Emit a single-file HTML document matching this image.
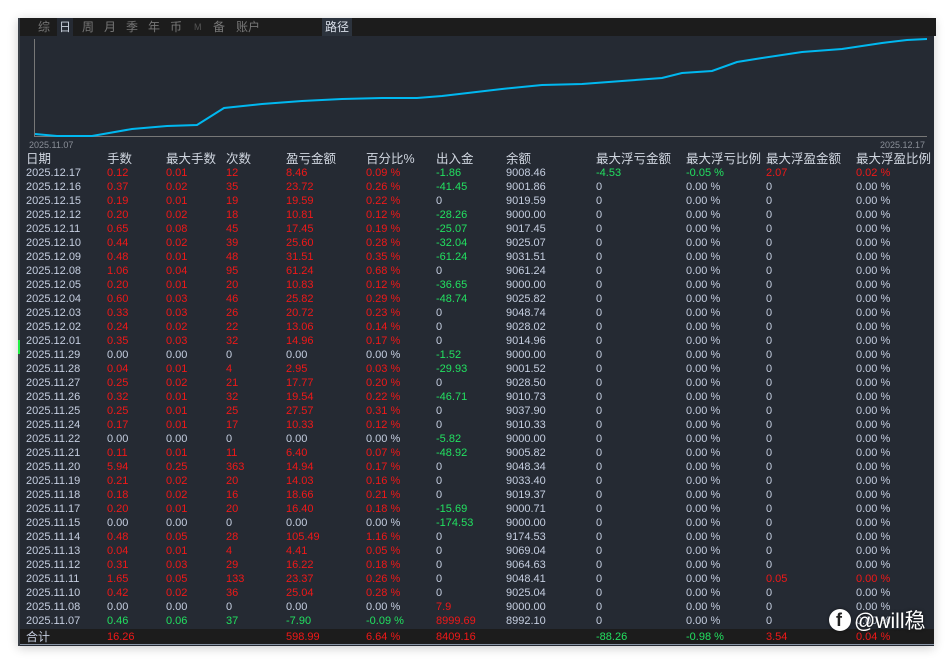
<!DOCTYPE html>
<html><head><meta charset="utf-8"><style>
*{margin:0;padding:0;box-sizing:border-box}
body{width:952px;height:663px;background:#fff;position:relative;overflow:hidden;font-family:"Liberation Sans","Noto Sans CJK SC",sans-serif}
#p{position:absolute;left:18px;top:18px;width:916px;height:628px;background:#252a33;box-shadow:0 2px 10px rgba(0,0,0,.2);border-left:2px solid #3a4048}
#tb{position:absolute;left:0;top:0;width:916px;height:18px;background:#1c1c1c;color:#777;font-size:12px;line-height:18px}
#tb span{position:absolute;top:0}
.r{position:absolute;left:0;height:14px;width:914px;font-size:11px;line-height:14px;color:#c5cee0}
.r span{position:absolute;top:0;white-space:nowrap}
.a{left:6px}.b{left:87px}.c{left:146px}.d{left:206px}.e{left:266px}.f{left:346px}.g{left:416px}.h{left:486px}.i{left:576px}.j{left:666px}.k{left:746px}.l{left:836px}
.R{color:#f01818}.G{color:#22e060}
.hd{font-size:12.5px;color:#d0d6e0;height:16px;line-height:16px}
</style></head><body>
<div id="p">
<div id="tb">
<span style="left:18px">综</span>
<span style="background:#252a33;color:#c8d0dc;padding:0 2px;left:37px">日</span>
<span style="left:62px">周</span><span style="left:84px">月</span><span style="left:106px">季</span><span style="left:128px">年</span><span style="left:150px">币</span><span style="left:174px;font-size:9px;color:#555">M</span><span style="left:193px">备</span><span style="left:216px">账户</span>
<span style="left:302px;background:#2c333d;color:#d8dee8;padding:0 3px">路径</span>
</div>
<svg style="position:absolute;left:0;top:0" width="916" height="628">
<line x1="14.5" y1="21" x2="14.5" y2="118" stroke="#777" stroke-width="1"/>
<line x1="14" y1="118.5" x2="907" y2="118.5" stroke="#777" stroke-width="1"/>
<polyline fill="none" stroke="#00b8f0" stroke-width="2" points="15,116 37,118 72,118 112,111 147,108 177,107 204,90 242,86 282,83 322,81 362,80 397,80 422,78 482,71 522,67 562,66 602,63 642,60 662,55 692,53 717,44 742,40 782,34 822,31 862,25 887,22 907,21"/>
<text x="9" y="130" font-size="9" fill="#8a8f98" font-family="Liberation Sans">2025.11.07</text>
<text x="905" y="130" font-size="9" fill="#8a8f98" font-family="Liberation Sans" text-anchor="end">2025.12.17</text>
</svg>
<div class="r hd" style="top:133px"><span class="a">日期</span><span class="b">手数</span><span class="c">最大手数</span><span class="d">次数</span><span class="e">盈亏金额</span><span class="f">百分比%</span><span class="g">出入金</span><span class="h">余额</span><span class="i">最大浮亏金额</span><span class="j">最大浮亏比例</span><span class="k">最大浮盈金额</span><span class="l">最大浮盈比例</span></div>
<div class="r" style="top:148px"><span class="a">2025.12.17</span><span class="b R">0.12</span><span class="c R">0.01</span><span class="d R">12</span><span class="e R">8.46</span><span class="f R">0.09 %</span><span class="g G">-1.86</span><span class="h">9008.46</span><span class="i G">-4.53</span><span class="j G">-0.05 %</span><span class="k R">2.07</span><span class="l R">0.02 %</span></div>
<div class="r" style="top:162px"><span class="a">2025.12.16</span><span class="b R">0.37</span><span class="c R">0.02</span><span class="d R">35</span><span class="e R">23.72</span><span class="f R">0.26 %</span><span class="g G">-41.45</span><span class="h">9001.86</span><span class="i">0</span><span class="j">0.00 %</span><span class="k">0</span><span class="l">0.00 %</span></div>
<div class="r" style="top:176px"><span class="a">2025.12.15</span><span class="b R">0.19</span><span class="c R">0.01</span><span class="d R">19</span><span class="e R">19.59</span><span class="f R">0.22 %</span><span class="g">0</span><span class="h">9019.59</span><span class="i">0</span><span class="j">0.00 %</span><span class="k">0</span><span class="l">0.00 %</span></div>
<div class="r" style="top:190px"><span class="a">2025.12.12</span><span class="b R">0.20</span><span class="c R">0.02</span><span class="d R">18</span><span class="e R">10.81</span><span class="f R">0.12 %</span><span class="g G">-28.26</span><span class="h">9000.00</span><span class="i">0</span><span class="j">0.00 %</span><span class="k">0</span><span class="l">0.00 %</span></div>
<div class="r" style="top:204px"><span class="a">2025.12.11</span><span class="b R">0.65</span><span class="c R">0.08</span><span class="d R">45</span><span class="e R">17.45</span><span class="f R">0.19 %</span><span class="g G">-25.07</span><span class="h">9017.45</span><span class="i">0</span><span class="j">0.00 %</span><span class="k">0</span><span class="l">0.00 %</span></div>
<div class="r" style="top:218px"><span class="a">2025.12.10</span><span class="b R">0.44</span><span class="c R">0.02</span><span class="d R">39</span><span class="e R">25.60</span><span class="f R">0.28 %</span><span class="g G">-32.04</span><span class="h">9025.07</span><span class="i">0</span><span class="j">0.00 %</span><span class="k">0</span><span class="l">0.00 %</span></div>
<div class="r" style="top:232px"><span class="a">2025.12.09</span><span class="b R">0.48</span><span class="c R">0.01</span><span class="d R">48</span><span class="e R">31.51</span><span class="f R">0.35 %</span><span class="g G">-61.24</span><span class="h">9031.51</span><span class="i">0</span><span class="j">0.00 %</span><span class="k">0</span><span class="l">0.00 %</span></div>
<div class="r" style="top:246px"><span class="a">2025.12.08</span><span class="b R">1.06</span><span class="c R">0.04</span><span class="d R">95</span><span class="e R">61.24</span><span class="f R">0.68 %</span><span class="g">0</span><span class="h">9061.24</span><span class="i">0</span><span class="j">0.00 %</span><span class="k">0</span><span class="l">0.00 %</span></div>
<div class="r" style="top:260px"><span class="a">2025.12.05</span><span class="b R">0.20</span><span class="c R">0.01</span><span class="d R">20</span><span class="e R">10.83</span><span class="f R">0.12 %</span><span class="g G">-36.65</span><span class="h">9000.00</span><span class="i">0</span><span class="j">0.00 %</span><span class="k">0</span><span class="l">0.00 %</span></div>
<div class="r" style="top:274px"><span class="a">2025.12.04</span><span class="b R">0.60</span><span class="c R">0.03</span><span class="d R">46</span><span class="e R">25.82</span><span class="f R">0.29 %</span><span class="g G">-48.74</span><span class="h">9025.82</span><span class="i">0</span><span class="j">0.00 %</span><span class="k">0</span><span class="l">0.00 %</span></div>
<div class="r" style="top:288px"><span class="a">2025.12.03</span><span class="b R">0.33</span><span class="c R">0.03</span><span class="d R">26</span><span class="e R">20.72</span><span class="f R">0.23 %</span><span class="g">0</span><span class="h">9048.74</span><span class="i">0</span><span class="j">0.00 %</span><span class="k">0</span><span class="l">0.00 %</span></div>
<div class="r" style="top:302px"><span class="a">2025.12.02</span><span class="b R">0.24</span><span class="c R">0.02</span><span class="d R">22</span><span class="e R">13.06</span><span class="f R">0.14 %</span><span class="g">0</span><span class="h">9028.02</span><span class="i">0</span><span class="j">0.00 %</span><span class="k">0</span><span class="l">0.00 %</span></div>
<div class="r" style="top:316px"><span class="a">2025.12.01</span><span class="b R">0.35</span><span class="c R">0.03</span><span class="d R">32</span><span class="e R">14.96</span><span class="f R">0.17 %</span><span class="g">0</span><span class="h">9014.96</span><span class="i">0</span><span class="j">0.00 %</span><span class="k">0</span><span class="l">0.00 %</span></div>
<div class="r" style="top:330px"><span class="a">2025.11.29</span><span class="b">0.00</span><span class="c">0.00</span><span class="d">0</span><span class="e">0.00</span><span class="f">0.00 %</span><span class="g G">-1.52</span><span class="h">9000.00</span><span class="i">0</span><span class="j">0.00 %</span><span class="k">0</span><span class="l">0.00 %</span></div>
<div class="r" style="top:344px"><span class="a">2025.11.28</span><span class="b R">0.04</span><span class="c R">0.01</span><span class="d R">4</span><span class="e R">2.95</span><span class="f R">0.03 %</span><span class="g G">-29.93</span><span class="h">9001.52</span><span class="i">0</span><span class="j">0.00 %</span><span class="k">0</span><span class="l">0.00 %</span></div>
<div class="r" style="top:358px"><span class="a">2025.11.27</span><span class="b R">0.25</span><span class="c R">0.02</span><span class="d R">21</span><span class="e R">17.77</span><span class="f R">0.20 %</span><span class="g">0</span><span class="h">9028.50</span><span class="i">0</span><span class="j">0.00 %</span><span class="k">0</span><span class="l">0.00 %</span></div>
<div class="r" style="top:372px"><span class="a">2025.11.26</span><span class="b R">0.32</span><span class="c R">0.01</span><span class="d R">32</span><span class="e R">19.54</span><span class="f R">0.22 %</span><span class="g G">-46.71</span><span class="h">9010.73</span><span class="i">0</span><span class="j">0.00 %</span><span class="k">0</span><span class="l">0.00 %</span></div>
<div class="r" style="top:386px"><span class="a">2025.11.25</span><span class="b R">0.25</span><span class="c R">0.01</span><span class="d R">25</span><span class="e R">27.57</span><span class="f R">0.31 %</span><span class="g">0</span><span class="h">9037.90</span><span class="i">0</span><span class="j">0.00 %</span><span class="k">0</span><span class="l">0.00 %</span></div>
<div class="r" style="top:400px"><span class="a">2025.11.24</span><span class="b R">0.17</span><span class="c R">0.01</span><span class="d R">17</span><span class="e R">10.33</span><span class="f R">0.12 %</span><span class="g">0</span><span class="h">9010.33</span><span class="i">0</span><span class="j">0.00 %</span><span class="k">0</span><span class="l">0.00 %</span></div>
<div class="r" style="top:414px"><span class="a">2025.11.22</span><span class="b">0.00</span><span class="c">0.00</span><span class="d">0</span><span class="e">0.00</span><span class="f">0.00 %</span><span class="g G">-5.82</span><span class="h">9000.00</span><span class="i">0</span><span class="j">0.00 %</span><span class="k">0</span><span class="l">0.00 %</span></div>
<div class="r" style="top:428px"><span class="a">2025.11.21</span><span class="b R">0.11</span><span class="c R">0.01</span><span class="d R">11</span><span class="e R">6.40</span><span class="f R">0.07 %</span><span class="g G">-48.92</span><span class="h">9005.82</span><span class="i">0</span><span class="j">0.00 %</span><span class="k">0</span><span class="l">0.00 %</span></div>
<div class="r" style="top:442px"><span class="a">2025.11.20</span><span class="b R">5.94</span><span class="c R">0.25</span><span class="d R">363</span><span class="e R">14.94</span><span class="f R">0.17 %</span><span class="g">0</span><span class="h">9048.34</span><span class="i">0</span><span class="j">0.00 %</span><span class="k">0</span><span class="l">0.00 %</span></div>
<div class="r" style="top:456px"><span class="a">2025.11.19</span><span class="b R">0.21</span><span class="c R">0.02</span><span class="d R">20</span><span class="e R">14.03</span><span class="f R">0.16 %</span><span class="g">0</span><span class="h">9033.40</span><span class="i">0</span><span class="j">0.00 %</span><span class="k">0</span><span class="l">0.00 %</span></div>
<div class="r" style="top:470px"><span class="a">2025.11.18</span><span class="b R">0.18</span><span class="c R">0.02</span><span class="d R">16</span><span class="e R">18.66</span><span class="f R">0.21 %</span><span class="g">0</span><span class="h">9019.37</span><span class="i">0</span><span class="j">0.00 %</span><span class="k">0</span><span class="l">0.00 %</span></div>
<div class="r" style="top:484px"><span class="a">2025.11.17</span><span class="b R">0.20</span><span class="c R">0.01</span><span class="d R">20</span><span class="e R">16.40</span><span class="f R">0.18 %</span><span class="g G">-15.69</span><span class="h">9000.71</span><span class="i">0</span><span class="j">0.00 %</span><span class="k">0</span><span class="l">0.00 %</span></div>
<div class="r" style="top:498px"><span class="a">2025.11.15</span><span class="b">0.00</span><span class="c">0.00</span><span class="d">0</span><span class="e">0.00</span><span class="f">0.00 %</span><span class="g G">-174.53</span><span class="h">9000.00</span><span class="i">0</span><span class="j">0.00 %</span><span class="k">0</span><span class="l">0.00 %</span></div>
<div class="r" style="top:512px"><span class="a">2025.11.14</span><span class="b R">0.48</span><span class="c R">0.05</span><span class="d R">28</span><span class="e R">105.49</span><span class="f R">1.16 %</span><span class="g">0</span><span class="h">9174.53</span><span class="i">0</span><span class="j">0.00 %</span><span class="k">0</span><span class="l">0.00 %</span></div>
<div class="r" style="top:526px"><span class="a">2025.11.13</span><span class="b R">0.04</span><span class="c R">0.01</span><span class="d R">4</span><span class="e R">4.41</span><span class="f R">0.05 %</span><span class="g">0</span><span class="h">9069.04</span><span class="i">0</span><span class="j">0.00 %</span><span class="k">0</span><span class="l">0.00 %</span></div>
<div class="r" style="top:540px"><span class="a">2025.11.12</span><span class="b R">0.31</span><span class="c R">0.03</span><span class="d R">29</span><span class="e R">16.22</span><span class="f R">0.18 %</span><span class="g">0</span><span class="h">9064.63</span><span class="i">0</span><span class="j">0.00 %</span><span class="k">0</span><span class="l">0.00 %</span></div>
<div class="r" style="top:554px"><span class="a">2025.11.11</span><span class="b R">1.65</span><span class="c R">0.05</span><span class="d R">133</span><span class="e R">23.37</span><span class="f R">0.26 %</span><span class="g">0</span><span class="h">9048.41</span><span class="i">0</span><span class="j">0.00 %</span><span class="k R">0.05</span><span class="l R">0.00 %</span></div>
<div class="r" style="top:568px"><span class="a">2025.11.10</span><span class="b R">0.42</span><span class="c R">0.02</span><span class="d R">36</span><span class="e R">25.04</span><span class="f R">0.28 %</span><span class="g">0</span><span class="h">9025.04</span><span class="i">0</span><span class="j">0.00 %</span><span class="k">0</span><span class="l">0.00 %</span></div>
<div class="r" style="top:582px"><span class="a">2025.11.08</span><span class="b">0.00</span><span class="c">0.00</span><span class="d">0</span><span class="e">0.00</span><span class="f">0.00 %</span><span class="g R">7.9</span><span class="h">9000.00</span><span class="i">0</span><span class="j">0.00 %</span><span class="k">0</span><span class="l">0.00 %</span></div>
<div class="r" style="top:596px"><span class="a">2025.11.07</span><span class="b G">0.46</span><span class="c G">0.06</span><span class="d G">37</span><span class="e G">-7.90</span><span class="f G">-0.09 %</span><span class="g R">8999.69</span><span class="h">8992.10</span><span class="i">0</span><span class="j">0.00 %</span><span class="k">0</span><span class="l">0.00 %</span></div>
</div>
<div style="position:absolute;left:20px;top:629px;width:914px;height:16px;background:#1c1c1c;border-bottom:1px solid #8a95a5"></div>
<div class="r" style="top:629px;left:20px;line-height:16px;height:16px"><span class="a" style="font-size:12px">合计</span><span class="b R">16.26</span><span class="e R">598.99</span><span class="f R">6.64 %</span><span class="g R">8409.16</span><span class="i G">-88.26</span><span class="j G">-0.98 %</span><span class="k R">3.54</span><span class="l R">0.04 %</span></div>
<div style="position:absolute;left:18px;top:340px;width:2px;height:14px;background:#22ee44"></div>
<div style="position:absolute;left:829px;top:609px;width:22px;height:22px;border-radius:50%;background:#fff;box-shadow:0 0 3px rgba(0,0,0,.5)"><span style="position:absolute;left:7px;top:1px;font:bold 18px 'Liberation Sans',sans-serif;color:#222">f</span></div>
<div style="position:absolute;left:854px;top:605px;font-size:21px;color:#fff;text-shadow:0 0 3px rgba(0,0,0,.7);font-family:'Liberation Sans','Noto Sans CJK SC',sans-serif">@will稳</div>
</body></html>
